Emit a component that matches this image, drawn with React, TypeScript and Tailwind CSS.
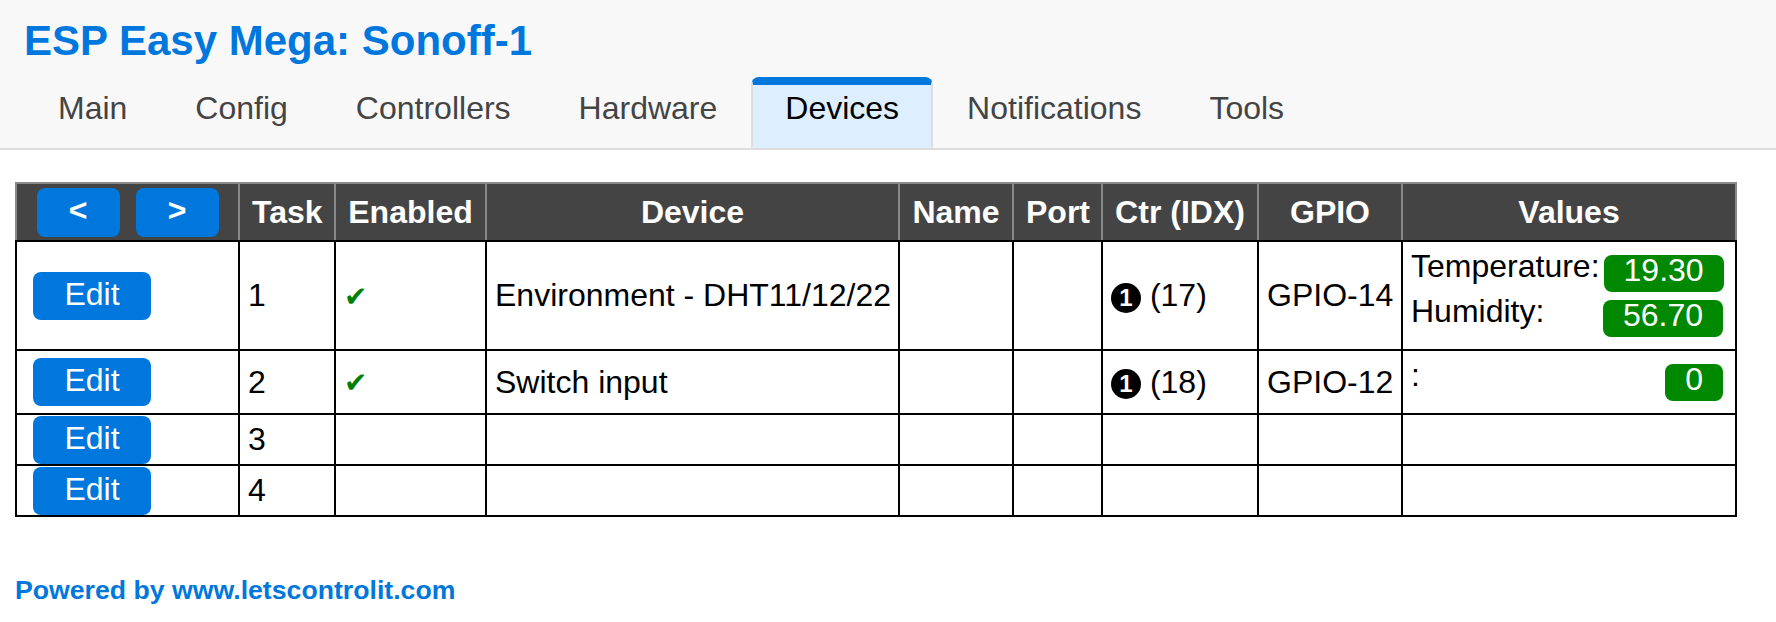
const tabs = ['Main', 'Config', 'Controllers', 'Hardware', 'Devices', 'Notifications', 'Tools'];

type Task = {
  task: number;
  enabled?: boolean;
  device?: string;
  idx?: number;
  gpio?: string;
  values?: [string, string][];
  h: string;
};

const tasks: Task[] = [
  {
    task: 1,
    enabled: true,
    device: 'Environment - DHT11/12/22',
    idx: 17,
    gpio: 'GPIO-14',
    values: [
      ['Temperature:', '19.30'],
      ['Humidity:', '56.70'],
    ],
    h: 'h-[109px]',
  },
  { task: 2, enabled: true, device: 'Switch input', idx: 18, gpio: 'GPIO-12', values: [[':', '0']], h: 'h-[64px]' },
  { task: 3, h: 'h-[51px]' },
  { task: 4, h: 'h-[51px]' },
];

const th = 'bg-[#444] text-white font-bold text-center border-2 border-[#888] border-b-black px-[12px] whitespace-nowrap';
const td = 'border-2 border-black px-[8px] py-0 align-middle whitespace-nowrap';

export default function App() {
  return (
    <div className="w-[1776px] bg-white font-['Liberation_Sans',Arial,sans-serif]">
      <header className="h-[150px] bg-[#f8f8f8] border-b-2 border-[#ddd] px-[24px] pt-[16px]">
        <h1 className="text-[42px] leading-[49px] font-bold text-[#07d]">ESP Easy Mega: Sonoff-1</h1>
        <nav className="flex mt-[12px]">
          {tabs.map((t) =>
            t === 'Devices' ? (
              <a
                key={t}
                className="block px-[32px] pt-[5px] pb-[19px] text-[32px] leading-[37px] text-black bg-[#def] border-t-[8px] border-x-2 border-b-2 border-t-[#07d] border-x-[#ddd] border-b-[#def] rounded-t-[8px] whitespace-nowrap"
              >
                {t}
              </a>
            ) : (
              <a
                key={t}
                className="block px-[32px] pt-[5px] pb-[19px] text-[32px] leading-[37px] text-[#444] border-t-[8px] border-x-2 border-b-2 border-transparent whitespace-nowrap"
              >
                {t}
              </a>
            )
          )}
        </nav>
      </header>

      <table className="ml-[15px] mt-[32px] border-collapse table-fixed w-[1722px] text-[32px] leading-[37px] text-black">
        <colgroup>
          <col className="w-[223px]" />
          <col className="w-[96px]" />
          <col className="w-[151px]" />
          <col className="w-[413px]" />
          <col className="w-[114px]" />
          <col className="w-[89px]" />
          <col className="w-[156px]" />
          <col className="w-[144px]" />
          <col className="w-[334px]" />
        </colgroup>
        <thead>
          <tr className="h-[58px]">
            <th className={th}>
              <div className="flex justify-center gap-[16px]">
                <button className="w-[83px] h-[49px] rounded-[8px] bg-[#07d] text-white font-bold pb-[3px]">&lt;</button>
                <button className="w-[83px] h-[49px] rounded-[8px] bg-[#07d] text-white font-bold pb-[3px]">&gt;</button>
              </div>
            </th>
            <th className={th}>Task</th>
            <th className={th}>Enabled</th>
            <th className={th}>Device</th>
            <th className={th}>Name</th>
            <th className={th}>Port</th>
            <th className={th}>Ctr (IDX)</th>
            <th className={th}>GPIO</th>
            <th className={th}>Values</th>
          </tr>
        </thead>
        <tbody>
          {tasks.map((r) => (
            <tr key={r.task} className={r.h}>
              <td className={`${td} pl-[16px]`}>
                <button className="flex items-center justify-center w-[118px] h-[48px] rounded-[8px] bg-[#07d] text-white pb-[3px]">
                  Edit
                </button>
              </td>
              <td className={td}>{r.task}</td>
              <td className={td}>
                {r.enabled && <span className="font-['DejaVu_Sans'] text-[28px] text-[#008000]">✔</span>}
              </td>
              <td className={td}>{r.device}</td>
              <td className={td}></td>
              <td className={td}></td>
              <td className={td}>
                {r.idx && (
                  <>
                    <span className="inline-flex items-center justify-center align-middle w-[30px] h-[30px] rounded-full bg-black text-white text-[24px] leading-none font-bold">
                      1
                    </span>{' '}
                    ({r.idx})
                  </>
                )}
              </td>
              <td className={td}>{r.gpio}</td>
              <td className={`${td} ${r.values ? 'pt-[9px] pb-[8px] align-top' : ''}`}>
                {r.values?.map(([name, val]) => (
                  <div key={name} className="flex justify-between items-start">
                    <span className="leading-[30px]">{name}</span>
                    <span className="m-[4px] h-[37px] px-[20px] leading-[30px] rounded-[8px] bg-[#080] text-white">
                      {val}
                    </span>
                  </div>
                ))}
              </td>
            </tr>
          ))}
        </tbody>
      </table>

      <div className="ml-[15px] mt-[58px] text-[26.67px] leading-[31px] font-bold text-[#07d]">
        Powered by www.letscontrolit.com
      </div>
    </div>
  );
}
